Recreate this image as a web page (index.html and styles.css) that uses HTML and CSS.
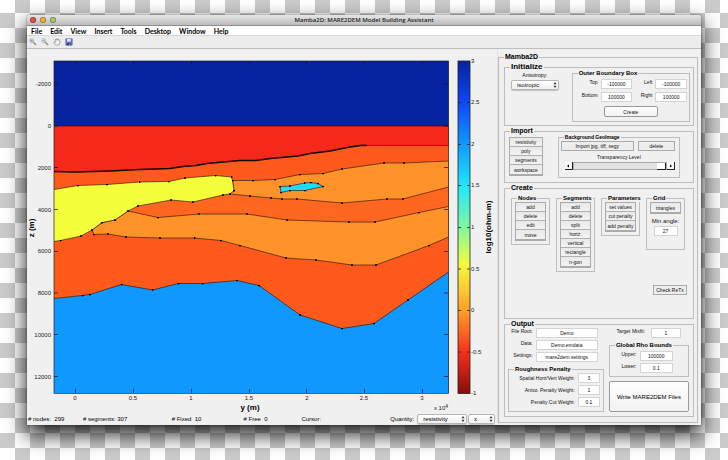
FILE: index.html
```html
<!DOCTYPE html>
<html lang="en">
<head>
<meta charset="utf-8">
<title>Mamba2D</title>
<link rel="stylesheet" href="styles.css">
</head>
<body>
<main class="window">
  <header class="titlebar">
    <div class="lights"><button class="light red" aria-label="Close"></button><button class="light amber" aria-label="Minimize"></button><button class="light green" aria-label="Zoom"></button></div>
    <h1>Mamba2D: MARE2DEM Model Building Assistant</h1>
  </header>
  <nav class="menubar">
    <a href="#">File</a><a href="#">Edit</a><a href="#">View</a><a href="#">Insert</a><a href="#">Tools</a><a href="#">Desktop</a><a href="#">Window</a><a href="#">Help</a>
  </nav>
  <div class="toolbar">
    <button aria-label="Zoom in"><svg viewBox="0 0 8 8"><path d="M4 4l3 3" stroke="#a08868" stroke-width="1.4"/><circle cx="2.7" cy="2.7" r="2" fill="#d5e4f2" stroke="#9fb0c2" stroke-width=".8"/><path d="M1.6 2.7h2.2M2.7 1.6v2.2" stroke="#678" stroke-width=".6"/></svg></button>
    <button aria-label="Zoom out"><svg viewBox="0 0 8 8"><path d="M4 4l3 3" stroke="#a08868" stroke-width="1.4"/><circle cx="2.7" cy="2.7" r="2" fill="#d5e4f2" stroke="#9fb0c2" stroke-width=".8"/><path d="M1.6 2.7h2.2" stroke="#678" stroke-width=".6"/></svg></button>
    <button aria-label="Pan"><svg viewBox="0 0 8 8"><path d="M2.4 7L.8 4.3l.6-.5 1 .7-.4-2.8.8-.4.6 1 .2-1.4h.9l.4 1.3.7-.9.7.4-.1 1.3.7-.2.3.8L6 7z" fill="#f5f5f5" stroke="#888" stroke-width=".7"/></svg></button>
    <button aria-label="Save"><svg viewBox="0 0 8 8"><path d="M.8.8h6.4v6.4H.8z" fill="#6a76c4" stroke="#4a569f" stroke-width=".6"/><path d="M2 1h3.8v2.6H2z" fill="#e4e8fa"/><path d="M2.3 5h3.4v2.2H2.3z" fill="#222a5c"/><path d="M4.3 5.4h.9v1.5h-.9z" fill="#dde"/></svg></button>
  </div>
  <div class="content">
    <section class="figure">
      <svg class="plot" viewBox="27 49 470 363" role="img" aria-label="Resistivity model">
        <defs>
          <marker id="node" viewBox="0 0 4 4" refX="2" refY="2" markerWidth="2" markerHeight="2" markerUnits="userSpaceOnUse"><circle cx="2" cy="2" r="2"/></marker>
          <linearGradient id="jet" x1="0" y1="0" x2="0" y2="1">
            <stop offset="0" stop-color="#05239f"/><stop offset=".125" stop-color="#1046f8"/><stop offset=".25" stop-color="#1098ff"/><stop offset=".375" stop-color="#1fe6fa"/><stop offset=".5" stop-color="#80f8a0"/><stop offset=".61" stop-color="#f4fa40"/><stop offset=".75" stop-color="#ffa028"/><stop offset=".875" stop-color="#f5301a"/><stop offset="1" stop-color="#8a0c0c"/>
          </linearGradient>
        </defs>
        <rect x="54" y="61" width="394.500" height="332" fill="#ff5a1c"/>
        <path d="M54 61H448.500V126H54z" fill="#05239f"/>
        <path d="M54 126H448.500V145.500H367L362 145.300 350 147 330 151 310 153.500 298 156 270 158.500 256 160.500 240 160.500 207 163.500 196 165.500 183 166.500 170 168.500 140 169.500 110 171 76 172 54 171.500z" fill="#f5281a"/>
        <path d="M230 194L250 196 271 198 282 199 297 199 342 203 387 199 403 199 448.500 187V206.500L419 212.500 375 222 349 222 287 220 247 214 199 214 158 217.500 128 211 138 206 171 200 193 202z" fill="#ff6720"/>
        <path d="M54 393V298.500L82.500 295.500 90 294.500 121.500 284.500 152.500 290 178.500 283.500 202.500 283.500 237 280.500 259 285.500 300 315 342 328.500 374 323.500 408 300 448.500 272V393z" fill="#0f99ff"/>
        <g class="layers">
          <path fill="none" d="M54 298.500L82.500 295.500 90 294.500 121.500 284.500 152.500 290 178.500 283.500 202.500 283.500 237 280.500 259 285.500 300 315 342 328.500 374 323.500 408 300 448.500 272"/>
          <path fill="#ff9228" d="M448.500 187L403 199 387 199 342 203 297 199 282 199 271 198 250 196 230 194 234 190.500 232.500 180.500 253 180.500 275 179.500 300 174.500 323 173.500 342 169 384 163 404 163 448.500 161"/>
          <path fill="#ff9228" d="M448.500 237L429 245.500 376 265 352 265 316 260 286 258 240 245.500 221 240.500 194.500 238 160 238 126 237 108 234 94 234.500 92 230 102 222.500 115 220 128 211 158 217.500 199 214 247 214 287 220 349 222 375 222 419 212.500 448.500 206.500"/>
          <path fill="#f4ff3c" d="M54 189.500L78 185.500 107 184.500 139.500 182 169 181.500 185 178 215.500 175.500 231.500 177 232.500 180.500 234 190.500 230 194 223 195 193 202 171 200 138 206 128 211 115 220 102 222.500 92 230 81 236 60.500 240.500 54 241.500"/>
          <path fill="#1edcf6" d="M280 186.500L290 186 304.500 183 311 182.500 318 183.500 323 186.500 305 190.500 290 190.500 281 192.500 280 186.500z"/>
        </g>
        <path d="M54 126H448.500M362 145.500H448.500" stroke="#400" stroke-width=".6"/>
        <path d="M54 171.500L76 172 110 171 140 169.500 170 168.500 183 166.500 196 165.500 207 163.500 240 160.500 256 160.500 270 158.500 298 156 310 153.500 330 151 350 147 362 145.300 367 145.500" fill="none" stroke="#100" stroke-width="1.600"/>
        <path d="M75.500 393v-4M133.500 393v-4M191.500 393v-4M249.500 393v-4M306.500 393v-4M364.500 393v-4M422.500 393v-4M75.500 61v4M133.500 61v4M191.500 61v4M249.500 61v4M306.500 61v4M364.500 61v4M422.500 61v4M54 84h4M54 126h4M54 167.500h4M54 209.500h4M54 251.500h4M54 293h4M54 334.500h4M54 376.500h4M448 84h-4M448 126h-4M448 167.500h-4M448 209.500h-4M448 251.500h-4M448 293h-4M448 334.500h-4M448 376.500h-4" stroke="#111" stroke-width=".7"/>
        <rect x="54" y="61" width="394.500" height="332.500" fill="none" stroke="#222" stroke-width=".7"/>
        <g class="tick end"><text x="51" y="86">-2000</text><text x="51" y="128">0</text><text x="51" y="170">2000</text><text x="51" y="212">4000</text><text x="51" y="253">6000</text><text x="51" y="295">8000</text><text x="51" y="337">10000</text><text x="51" y="379">12000</text></g>
        <g class="tick mid"><text x="75" y="400">0</text><text x="133" y="400">0.5</text><text x="191" y="400">1</text><text x="249" y="400">1.5</text><text x="307" y="400">2</text><text x="364" y="400">2.5</text><text x="422" y="400">3</text><text x="441" y="410">x 10<tspan class="sup" dy="-2">4</tspan></text></g>
        <text class="axis" x="250" y="410">y (m)</text>
        <text class="axis" transform="translate(34 228) rotate(-90)">z (m)</text>
        <rect x="458" y="61" width="12" height="332.500" fill="url(#jet)" stroke="#222" stroke-width=".8"/>
        <path d="M458 102.500h3M458 144.500h3M458 185.500h3M458 227.500h3M458 269h3M458 310.500h3M458 352h3M470 102.500h-3M470 144.500h-3M470 185.500h-3M470 227.500h-3M470 269h-3M470 310.500h-3M470 352h-3" stroke="#222" stroke-width=".8"/>
        <g class="tick"><text x="471" y="63">3</text><text x="471" y="104">2.5</text><text x="471" y="146">2</text><text x="471" y="187">1.5</text><text x="471" y="229">1</text><text x="471" y="271">0.5</text><text x="471" y="312">0</text><text x="471" y="354">-0.5</text><text x="471" y="395">-1</text></g>
        <text class="axis" transform="translate(491 227) rotate(-90)">log10(ohm-m)</text>
      </svg>
      <footer class="status">
        <span># nodes:&nbsp; 299</span><span># segments: 307</span><span># Fixed&nbsp; 10</span><span># Free&nbsp; 0</span><span>Cursor:</span>
        <label for="quantity">Quantity:</label>
        <div class="pick"><select id="quantity"><option>resistivity</option></select><svg viewBox="0 0 4 6"><path d="M2 0l1.500 2.200h-3zM2 6L.5 3.800h3z"/></svg></div>
        <div class="pick"><select aria-label="Component"><option>x</option></select><svg viewBox="0 0 4 6"><path d="M2 0l1.500 2.200h-3zM2 6L.5 3.800h3z"/></svg></div>
      </footer>
    </section>
    <aside class="side">
      <fieldset class="root">
        <legend class="big">Mamba2D</legend>
        <div class="stack">
          <fieldset class="group">
            <legend class="huge">Initialize</legend>
            <div class="init">
              <div class="aniso"><label for="aniso">Anisotropy:</label>
                <div class="pick"><select id="aniso"><option>isotropic</option></select><svg viewBox="0 0 4 6"><path d="M2 0l1.500 2.200h-3zM2 6L.5 3.800h3z"/></svg></div></div>
              <fieldset class="bounds"><legend>Outer Boundary Box</legend>
                <div class="bounds-grid">
                  <label for="top">Top</label><input id="top" value="-100000"><label for="left">Left</label><input id="left" value="-100000">
                  <label for="bottom">Bottom</label><input id="bottom" value="100000"><label for="right">Right</label><input id="right" value="100000">
                </div>
                <button class="round create">Create</button>
              </fieldset>
            </div>
          </fieldset>
          <fieldset class="group">
            <legend class="big">Import</legend>
            <div class="import">
              <div class="list"><button>resistivity</button><button>poly</button><button>segments</button><button>workspace</button></div>
              <fieldset class="geo"><legend class="small">Background GeoImage</legend>
                <div class="geo-buttons"><button class="flat">Import jpg, tiff, segy</button><button class="flat">delete</button></div>
                <label for="alpha">Transparency Level</label>
                <div class="slider"><button aria-label="Decrease"><svg viewBox="0 0 4 4"><path d="M3 .5v3L1 2z"/></svg></button><input id="alpha" type="range" min="0" max="100" value="100"><button aria-label="Increase"><svg viewBox="0 0 4 4"><path d="M1 .5v3L3 2z"/></svg></button></div>
              </fieldset>
            </div>
          </fieldset>
          <fieldset class="group grow">
            <legend class="big">Create</legend>
            <div class="tools">
              <fieldset class="tool"><legend>Nodes</legend><div class="list"><button>add</button><button>delete</button><button>edit</button><button>move</button></div></fieldset>
              <fieldset class="tool"><legend>Segments</legend><div class="list"><button>add</button><button>delete</button><button>split</button><button>horiz.</button><button>vertical</button><button>rectangle</button><button>n-gon</button></div></fieldset>
              <fieldset class="tool"><legend>Parameters</legend><div class="list"><button>set values</button><button>cut penalty</button><button>add penalty</button></div></fieldset>
              <fieldset class="tool grid-tool"><legend>Grid</legend><div class="list"><button>triangles</button></div><label for="angle">Min angle:</label><input id="angle" value="27"></fieldset>
            </div>
            <div class="check"><button class="flat">Check ReTx</button></div>
          </fieldset>
          <fieldset class="group">
            <legend class="big">Output</legend>
            <div class="output">
              <div class="out-left">
                <div class="files">
                  <label for="root">File Root:</label><input id="root" value="Demo">
                  <label for="data">Data:</label><input id="data" value="Demo.emdata">
                  <label for="settings">Settings:</label><input id="settings" value="mare2dem.settings">
                </div>
                <fieldset class="rough"><legend>Roughness Penalty</legend>
                  <div class="rough-grid">
                    <label for="spatial">Spatial Horz/Vert Weight:</label><input id="spatial" value="3">
                    <label for="anisw">Aniso. Penalty Weight:</label><input id="anisw" value="1">
                    <label for="cut">Penalty Cut Weight:</label><input id="cut" value="0.1">
                  </div>
                </fieldset>
              </div>
              <div class="out-right">
                <div class="misfit"><label for="misfit">Target Misfit:</label><input id="misfit" value="1"></div>
                <fieldset class="rho"><legend>Global Rho Bounds</legend>
                  <div class="rho-grid"><label for="upper">Upper:</label><input id="upper" value="100000"><label for="lower">Lower:</label><input id="lower" value="0.1"></div>
                </fieldset>
                <button class="round write">Write MARE2DEM Files</button>
              </div>
            </div>
          </fieldset>
        </div>
      </fieldset>
    </aside>
  </div>
</main>
</body>
</html>
```
FILE: styles.css
```css
* { box-sizing: border-box; }
body {
  margin: 0;
  min-height: 100vh;
  padding: 15px 27px 35px;
  display: flex;
  font: 5px/6px "Liberation Sans", sans-serif;
  color: #111;
  background: conic-gradient(#cbcbcb 25%, #fff 0 50%, #cbcbcb 0 75%, #fff 0) 0 -2px / 30px 30px;
}
button, input, select { font: inherit; color: inherit; margin: 0; padding: 0; border-radius: 0; min-width: 0; }
fieldset { margin: 0; padding: 0; min-width: 0; border: 1px solid #bdbdbd; }
legend { margin-left: 5px; margin-right: auto; padding: 0 1px; font-size: 6px; line-height: 8px; font-weight: bold; color: #000; }
legend.small { font-size: 5px; }
legend.big { font-size: 7px; }
legend.huge { font-size: 8px; }

.window {
  flex: 1;
  display: flex;
  flex-direction: column;
  background: #f0f0f0;
  border-radius: 3px 3px 0 0;
  box-shadow: 0 0 2px rgba(0,0,0,.5), 0 9px 20px 1px rgba(0,0,0,.85);
}
.titlebar {
  display: grid;
  grid-template-columns: 1fr auto 1fr;
  align-items: center;
  height: 11px;
  border-radius: 3px 3px 0 0;
  border-bottom: 1px solid #8e8e8e;
  background: linear-gradient(#e6e6e6, #bcbcbc);
}
.titlebar h1 { margin: 0; font: 600 6px/10px "Open Sans", sans-serif; color: #222; }
.lights { display: flex; gap: 4px; padding-left: 3px; }
.light { width: 6px; height: 6px; border: 1px solid #0005; border-radius: 50%; }
.red { background: #ee5349; }
.amber { background: #f5b83d; }
.green { background: #a8cf70; }
.menubar { display: flex; gap: 8px; padding-left: 4px; height: 9px; background: #fff; font: bold 7px/10px Lato, sans-serif; }
.menubar a { color: #000; text-decoration: none; }
.toolbar { display: flex; align-items: center; gap: 4px; height: 14px; padding-left: 2px; background: #ececec; border-top: 1px solid #d8d8d8; border-bottom: 1px solid #b9bfc2; }
.toolbar button { width: 8px; height: 8px; border: 0; background: none; display: flex; }
.toolbar svg { width: 8px; height: 8px; fill: none; }

.content { flex: 1; display: grid; grid-template-columns: 470fr 204fr; }
.figure { display: flex; flex-direction: column; min-width: 0; }
.plot { display: block; width: 100%; flex: 1; min-height: 0; }
.layers { stroke: #1d0d04; stroke-width: .6; stroke-linejoin: round; }
.layers path { marker-mid: url(#node); }
.tick { font-size: 6px; fill: #222; }
.end { text-anchor: end; }
.mid { text-anchor: middle; }
.sup { font-size: 5px; }
.axis { font-size: 8px; font-weight: bold; text-anchor: middle; }
.status { display: grid; grid-template-columns: 54fr 88fr 71fr 57fr 88fr 26fr 50fr 27fr; align-items: center; column-gap: 1px; height: 13px; padding: 0 2px 0 1px; font-size: 6px; line-height: 8px; color: #000; }

.pick { position: relative; height: 10px; }
.pick select { width: 100%; height: 100%; padding: 0 5px; appearance: none; border: 1px solid #b5b5b5; border-radius: 2px; background: linear-gradient(#fff, #efefef); font-size: 6px; line-height: 8px; box-shadow: 0 1px 1px #0003; display: block; }
.pick svg { position: absolute; right: 2px; top: 2px; width: 4px; height: 6px; fill: #333; pointer-events: none; }
input { width: 100%; height: 10px; border: 1px solid #d4d4d4; background: #fff; text-align: center; }
label { white-space: nowrap; }
button { white-space: nowrap; overflow: hidden; }
.flat { height: 10px; border: 1px solid #a9a9a9; background: #ededed; }
.round { border: 1px solid #999; border-radius: 2px; background: linear-gradient(#fff, #f1f1f1); }
.list { display: grid; grid-auto-rows: 9px; border: 1px solid #aaa; border-bottom-width: 2px; }
.list button { border: 0; border-bottom: 1px solid #b0b0b0; background: linear-gradient(#e9e9e9, #f2f2f2); line-height: 8px; }
.list button:last-child { border-bottom: 0; }

.side { display: flex; padding: 4px 3px 2px 0; border-left: 1px solid #e2e2e2; min-width: 0; }
.root { flex: 1; }
.root > .stack { height: 100%; padding: 2px 3px 5px 5px; }
.stack { display: flex; flex-direction: column; gap: 1px; }
.group { display: block; }
.grow { flex: 1; }

.init { display: grid; grid-template-columns: 48fr 119fr; column-gap: 13px; margin-top: -2px; padding: 0 3px 3px 6px; }
.aniso { padding-top: 3px; text-align: center; }
.aniso .pick { margin-top: 2px; }
.bounds-grid { display: grid; grid-template-columns: 24fr 33fr 18fr 33fr; gap: 3px; align-items: start; padding: 2px 2px 0; text-align: right; }
.create { display: block; width: 46%; height: 11px; margin: 4px auto 4px; }

.import { display: grid; grid-template-columns: 34fr 123fr; column-gap: 15px; align-items: start; margin-top: -2px; padding: 0 13px 4px 4px; }
.import > .list { margin-top: 4px; }
.geo { text-align: center; }
.geo-buttons { display: grid; grid-template-columns: 74fr 38fr; column-gap: 4px; padding: 0 4px 3px 2px; }
.geo > label { display: block; }
.slider { display: grid; grid-template-columns: 8px 1fr 8px; height: 8px; margin: 2px 4px 7px 6px; }
.slider button { border: 0; border-right: 1px solid #222; border-bottom: 1px solid #222; background: #f8f8f8; display: grid; place-items: center; }
.slider svg { width: 4px; height: 4px; }
.slider input { appearance: none; height: 8px; border: 1px solid #aaa; background: #e2e2e2; }
.slider input::-webkit-slider-thumb { appearance: none; width: 9px; height: 7px; background: #fff; border-right: 1px solid #222; border-bottom: 1px solid #222; }

.tools { display: grid; grid-template-columns: repeat(4, 1fr); column-gap: 6px; align-items: start; padding: 2px 8px 0 6px; }
.tool .list { margin: 0 3px 3px; }
.tool legend { white-space: nowrap; }
.grid-tool { text-align: center; }
.grid-tool label { display: block; font-size: 6px; line-height: 8px; }
.grid-tool input { width: 24px; margin: 1px 0 13px; }
.check { display: flex; justify-content: flex-end; padding: 13px 6px 0; }
.check button { width: 34px; }

.output { display: grid; grid-template-columns: 97fr 81fr; column-gap: 5px; padding: 0 4px 4px 3px; }
.files { display: grid; grid-template-columns: 25fr 63fr; gap: 2px 3px; padding: 0 6px 0 0; margin-bottom: 3px; text-align: right; }
.rough-grid { display: grid; grid-template-columns: 1fr 22px; gap: 2px 3px; padding: 0 3px 4px; align-items: center; text-align: right; }
.out-right { display: flex; flex-direction: column; }
.misfit { display: grid; grid-template-columns: 36fr 30fr; column-gap: 6px; padding-right: 8px; text-align: right; }
.rho { margin: 3px 0 4px; }
.rho-grid { display: grid; grid-template-columns: 27fr 34fr; gap: 2px 3px; padding: 2px 15px 3px 0; text-align: right; }
.write { flex: 1; font-size: 6px; color: #000; }
```
